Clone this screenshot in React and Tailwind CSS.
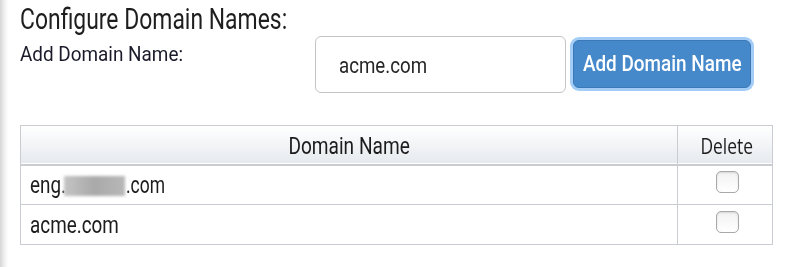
const squish = "inline-block origin-left whitespace-nowrap";

function Checkbox() {
  return (
    <span className="inline-block h-[22px] w-[23px] rounded-[5px] border border-[#a9a9a9] bg-gradient-to-b from-[#f2f2f2] to-white shadow-[inset_0_1px_2px_rgba(0,0,0,0.12)]" />
  );
}

function DomainRow({ children, last }) {
  return (
    <tr className={last ? "" : "border-b border-[#c9cdd2]"}>
      <td className="h-[40px] border-r border-[#c9cdd2] pl-[9px] pt-[2px] text-[23px] leading-none text-[#1c1c1c]">
        {children}
      </td>
      <td className="h-[40px] pt-[2px] text-center align-middle">
        <span className="ml-[4px] inline-block">
          <Checkbox />
        </span>
      </td>
    </tr>
  );
}

export default function App() {
  return (
    <div
      className="flex h-[267px] w-[800px] overflow-hidden bg-white"
      style={{ fontFamily: "Roboto, 'Noto Sans', sans-serif" }}
    >
      <div className="w-[8px] shrink-0 bg-gradient-to-r from-[#d6d6d6] via-[#eeeeee] to-white" />
      <div className="flex-1 pl-[12px] pr-[27px]">
        <h1 className="pt-[5px] text-[29px] leading-[29px] font-normal text-[#1e1e1e]">
          <span className={`${squish} scale-x-[0.79]`}>Configure Domain Names:</span>
        </h1>

        <div className="mt-[2px] flex items-start">
          <label className="mt-[8px] w-[295px] shrink-0 text-[21px] leading-[21px] text-[#1a1a2a]">
            <span className={`${squish} scale-x-[0.9]`}>Add Domain Name:</span>
          </label>
          <div className="flex h-[57px] w-[251px] shrink-0 items-center rounded-[6px] border border-[#c4c4c4] bg-white pt-[3px] pl-[23px]">
            <span className={`${squish} scale-x-[0.85] text-[22px] leading-none text-[#262626]`}>
              acme.com
            </span>
          </div>
          <button className="mt-[4px] ml-[7px] flex h-[48px] w-[178px] shrink-0 items-center justify-center rounded-[6px] border border-[#3a78b8] bg-[#4589ca] text-[22px] leading-none font-medium text-white ring-[3px] ring-[#a3cdf7]">
            <span className="inline-block origin-center scale-x-[0.86] whitespace-nowrap">
              Add Domain Name
            </span>
          </button>
        </div>

        <table className="mt-[32px] w-[753px] border-collapse border border-[#c9cdd2]">
          <thead>
            <tr className="border-b-2 border-[#c9cdd2] bg-gradient-to-b from-white to-[#e6eaee]">
              <th className="h-[39px] border-r border-[#c9cdd2] pt-[3px] text-center text-[23px] leading-none font-normal text-[#1c1c1c]">
                <span className="inline-block origin-center scale-x-[0.83] whitespace-nowrap">
                  Domain Name
                </span>
              </th>
              <th
                className="h-[39px] w-[95px] pt-[3px] text-center text-[21px] leading-none font-normal text-[#1c1c1c]"
                style={{ fontFamily: "'Open Sans', sans-serif" }}
              >
                <span className="ml-[4px] inline-block origin-center scale-x-[0.83] whitespace-nowrap">
                  Delete
                </span>
              </th>
            </tr>
          </thead>
          <tbody>
            <DomainRow>
              <span className="inline-flex items-center">
                <span className={`${squish} w-[33px] scale-x-[0.82]`}>eng.</span>
                <span className="mx-[1px] inline-block h-[20px] w-[61px] bg-gradient-to-r from-[#c4c4c4] via-[#a9a9a9] to-[#b8b8b8] blur-[1.5px]" />
                <span className={`${squish} scale-x-[0.76]`}>.com</span>
              </span>
            </DomainRow>
            <DomainRow last>
              <span className={`${squish} scale-x-[0.82]`}>acme.com</span>
            </DomainRow>
          </tbody>
        </table>
      </div>
    </div>
  );
}
